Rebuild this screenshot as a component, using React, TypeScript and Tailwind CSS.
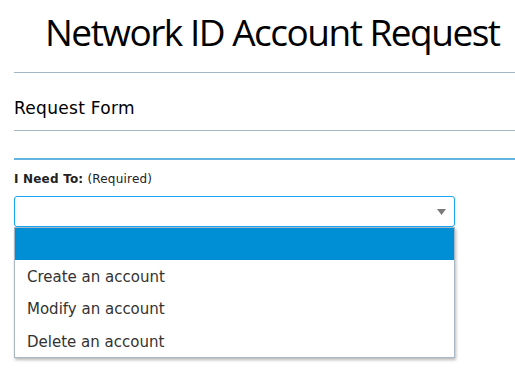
import { useState } from "react";

const options = ["", "Create an account", "Modify an account", "Delete an account"];

export default function App() {
  const [active] = useState(0);

  return (
    <div className="min-h-screen bg-white pl-[14px] text-black">
      <h1 className="border-b border-[#a3b6c5] pt-[7px] pb-[15px] pl-[31px] font-['Open_Sans',sans-serif] text-[37px] leading-[50px] font-normal tracking-[-1.5px] whitespace-nowrap">
        Network ID Account Request
      </h1>

      <h2 className="border-b border-[#a3b6c5] pt-[25px] pb-[12px] font-['DejaVu_Sans',sans-serif] text-[17px] leading-[20px] font-normal tracking-[0.3px]">
        Request Form
      </h2>

      <div className="h-[29px] border-b-2 border-[#62b5e0]" />

      <div className="mt-[11px] font-['DejaVu_Sans',sans-serif] text-[12px] leading-[16px] tracking-[0.2px] text-[#222]">
        <span className="font-bold">I Need To:</span> (Required)
      </div>

      <div className="relative mt-[9px] w-[441px]">
        <div className="flex h-[31px] items-center justify-end rounded-[3px] border border-[#14a6f2] pr-[8px]">
          <svg width="9" height="6" viewBox="0 0 9 6">
            <polygon points="0,0 9,0 4.5,6" fill="#7a7a7a" />
          </svg>
        </div>

        <ul className="absolute top-full left-0 w-[441px] border border-[#a9b6c3] bg-white shadow-[1px_2px_3px_rgba(0,0,0,0.28)] font-['DejaVu_Sans',sans-serif] text-[15px] text-[#333]">
          {options.map((opt, i) => (
            <li
              key={i}
              className={
                i === active
                  ? "flex h-[32px] items-center bg-[#008fd5] pl-[12px] text-white"
                  : "flex h-[32.4px] items-center pl-[12px] pt-[2px]"
              }
            >
              {opt}
            </li>
          ))}
        </ul>
      </div>
    </div>
  );
}
